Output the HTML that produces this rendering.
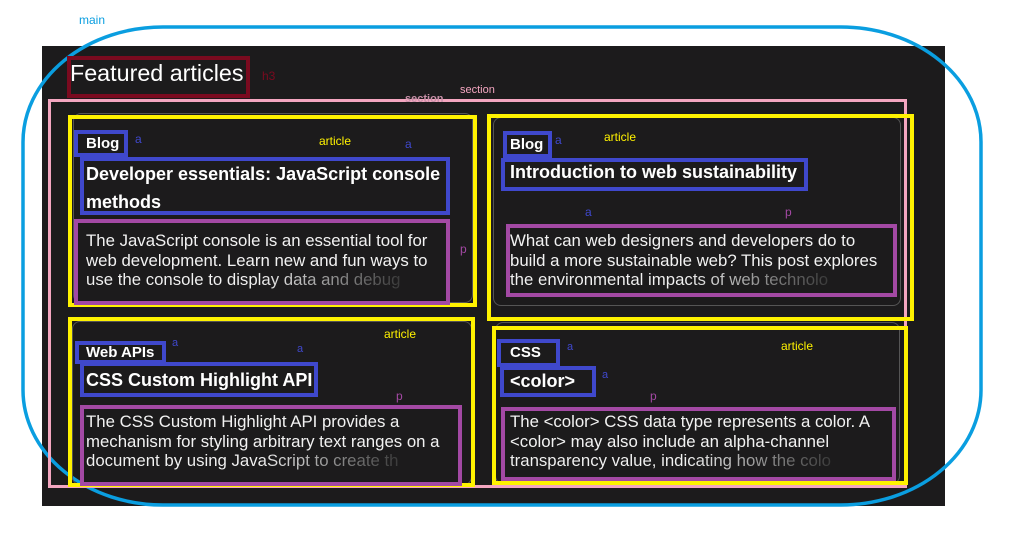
<!DOCTYPE html>
<html><head><meta charset="utf-8"><style>
*{margin:0;padding:0;box-sizing:border-box}
body{width:1034px;height:546px;background:#fff;position:relative;overflow:hidden;font-family:"Liberation Sans","DejaVu Sans",sans-serif}
.abs{position:absolute}
.dark{left:42px;top:46px;width:903px;height:460px;background:#1c1b1c}
.box{position:absolute;border-style:solid}
.y{border:4px solid #fff200}
.b{border:4px solid #3f48cc}
.p{border:4px solid #a349a4}
.t{position:absolute;color:#fff;white-space:nowrap}
.lbl{position:absolute;font-size:12px;white-space:nowrap}
.desc{position:absolute;color:#f2f2f2;font-size:16.8px;line-height:19.5px;white-space:nowrap}
.fade{background:linear-gradient(90deg,#f2f2f2 0,#f2f2f2 55%,#3a3a3a 100%);-webkit-background-clip:text;background-clip:text;color:transparent}
.cat{font-size:15px;font-weight:bold}
.title{font-size:18px;font-weight:bold}
</style></head><body>
<div class="abs dark"></div>
<svg class="abs" style="left:0;top:0" width="1034" height="546"><rect x="23" y="27" width="958" height="478" rx="140" ry="115" fill="none" stroke="#0a9ee0" stroke-width="3.5"/></svg>
<div class="lbl" style="left:79px;top:13px;color:#0a9ee0">main</div>

<div class="box" style="left:67px;top:56px;width:183px;height:42px;border:4px solid #7a0a1f"></div>
<div class="t" style="left:70px;top:60px;font-size:23.3px">Featured articles</div>
<div class="lbl" style="left:262px;top:69px;color:#7a0a1f">h3</div>

<div class="box" style="left:48px;top:99px;width:859px;height:389px;border:3px solid #f4a6c0"></div>
<div class="lbl" style="left:460px;top:84px;color:#f4a6c0;font-size:11px">section</div>
<div class="lbl" style="left:405px;top:93px;color:#c890a8;font-size:11px;font-weight:bold">section</div>

<!-- article 1 -->
<div class="box" style="left:73px;top:113px;width:400px;height:190px;border:1px solid #555;border-radius:8px"></div>
<div class="box y" style="left:68px;top:115px;width:409px;height:192px"></div>
<div class="box b" style="left:74px;top:130px;width:54px;height:27px"></div>
<div class="t cat" style="left:86px;top:135px">Blog</div>
<div class="lbl" style="left:135px;top:132px;color:#3f48cc">a</div>
<div class="lbl" style="left:319px;top:134px;color:#fff200">article</div>
<div class="lbl" style="left:405px;top:137px;color:#3f48cc">a</div>
<div class="box b" style="left:80px;top:157px;width:370px;height:58px"></div>
<div class="t title" style="left:86px;top:160px;line-height:28px">Developer essentials: JavaScript console<br>methods</div>
<div class="box p" style="left:74px;top:219px;width:376px;height:86px"></div>
<div class="desc" style="left:86px;top:231px">The JavaScript console is an essential tool for<br>web development. Learn new and fun ways to<br><span class="fade">use the console to display data and debug</span></div>
<div class="lbl" style="left:460px;top:242px;color:#a349a4">p</div>

<!-- article 2 -->
<div class="box" style="left:493px;top:117px;width:408px;height:189px;border:1px solid #555;border-radius:8px"></div>
<div class="box y" style="left:487px;top:114px;width:427px;height:207px"></div>
<div class="box b" style="left:503px;top:131px;width:49px;height:27px"></div>
<div class="t cat" style="left:510px;top:136px">Blog</div>
<div class="lbl" style="left:555px;top:133px;color:#3f48cc">a</div>
<div class="lbl" style="left:604px;top:130px;color:#fff200">article</div>
<div class="box b" style="left:501px;top:158px;width:307px;height:33px"></div>
<div class="t title" style="left:510px;top:162px">Introduction to web sustainability</div>
<div class="lbl" style="left:585px;top:205px;color:#3f48cc">a</div>
<div class="lbl" style="left:785px;top:205px;color:#a349a4">p</div>
<div class="box p" style="left:506px;top:224px;width:391px;height:73px"></div>
<div class="desc" style="left:510px;top:231px">What can web designers and developers do to<br>build a more sustainable web? This post explores<br><span class="fade">the environmental impacts of web technolo</span></div>

<!-- article 3 -->
<div class="box" style="left:72px;top:321px;width:400px;height:164px;border:1px solid #555;border-radius:8px"></div>
<div class="box y" style="left:68px;top:317px;width:407px;height:170px"></div>
<div class="box b" style="left:75px;top:341px;width:91px;height:23px"></div>
<div class="t cat" style="left:86px;top:344px">Web APIs</div>
<div class="lbl" style="left:172px;top:337px;color:#3f48cc;font-size:11px">a</div>
<div class="lbl" style="left:297px;top:343px;color:#3f48cc;font-size:11px">a</div>
<div class="lbl" style="left:384px;top:327px;color:#fff200">article</div>
<div class="box b" style="left:80px;top:362px;width:238px;height:35px"></div>
<div class="t title" style="left:86px;top:370px">CSS Custom Highlight API</div>
<div class="lbl" style="left:396px;top:389px;color:#a349a4">p</div>
<div class="box p" style="left:80px;top:405px;width:382px;height:81px"></div>
<div class="desc" style="left:86px;top:412px">The CSS Custom Highlight API provides a<br>mechanism for styling arbitrary text ranges on a<br><span class="fade">document by using JavaScript to create th</span></div>

<!-- article 4 -->
<div class="box" style="left:495px;top:322px;width:405px;height:162px;border:1px solid #555;border-radius:8px"></div>
<div class="box y" style="left:492px;top:326px;width:416px;height:159px"></div>
<div class="box b" style="left:497px;top:339px;width:63px;height:28px"></div>
<div class="t cat" style="left:510px;top:344px">CSS</div>
<div class="lbl" style="left:567px;top:341px;color:#3f48cc;font-size:11px">a</div>
<div class="lbl" style="left:781px;top:339px;color:#fff200">article</div>
<div class="box b" style="left:500px;top:366px;width:96px;height:31px"></div>
<div class="t title" style="left:510px;top:371px">&lt;color&gt;</div>
<div class="lbl" style="left:602px;top:369px;color:#3f48cc;font-size:11px">a</div>
<div class="lbl" style="left:650px;top:389px;color:#a349a4">p</div>
<div class="box p" style="left:501px;top:407px;width:395px;height:74px"></div>
<div class="desc" style="left:510px;top:412px">The &lt;color&gt; CSS data type represents a color. A<br>&lt;color&gt; may also include an alpha-channel<br><span class="fade">transparency value, indicating how the colo</span></div>
</body></html>
